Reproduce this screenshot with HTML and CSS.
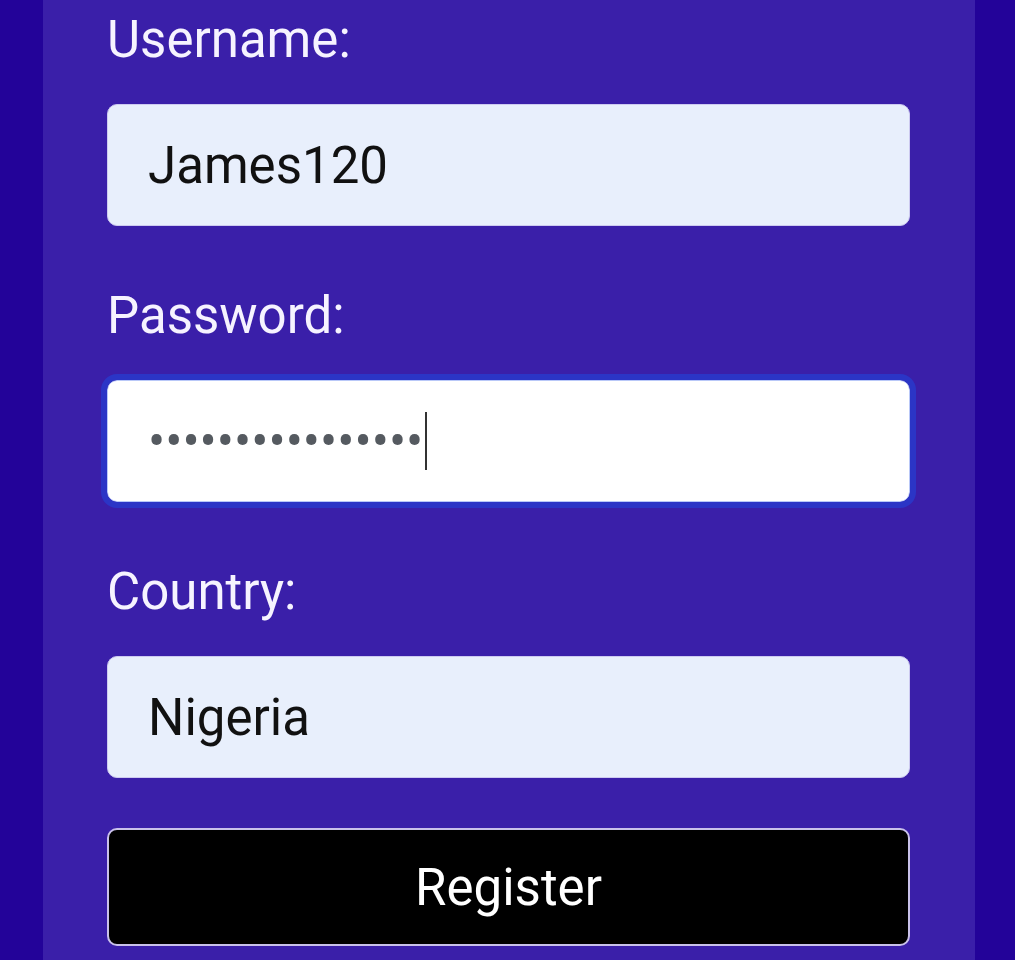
FILE: index.html
```html
<!DOCTYPE html>
<html lang="en">
<head>
<meta charset="utf-8">
<title>Register</title>
<link rel="stylesheet" href="styles.css">
</head>
<body>
<main class="panel">
  <form class="form">
    <div class="field">
      <label class="label" for="username">Username:</label>
      <input class="input autofilled" id="username" type="text" value="James120">
    </div>
    <div class="field">
      <label class="label" for="password">Password:</label>
      <div class="input-wrap">
        <input class="input focused" id="password" type="password" value="abcdefghijklmnop">
        <span class="caret"></span>
      </div>
    </div>
    <div class="field last">
      <label class="label" for="country">Country:</label>
      <input class="input autofilled" id="country" type="text" value="Nigeria">
    </div>
    <button class="btn" type="button">Register</button>
  </form>
</main>
</body>
</html>
```
FILE: styles.css
```css
html, body {
  margin: 0;
  padding: 0;
}
body {
  background: #230399;
  height: 960px;
  overflow: hidden;
  font-family: Roboto, "Liberation Sans", sans-serif;
}
.panel {
  margin: 0 40px 0 43px;
  min-height: 960px;
  background: #3a1fa9;
  padding: 10px 65px 0 64px;
  box-sizing: border-box;
}
.form {
  display: flex;
  flex-direction: column;
}
.field {
  display: flex;
  flex-direction: column;
  gap: 35px;
  margin-bottom: 60px;
}
.field.last {
  margin-bottom: 50px;
}
.label {
  font-size: 51px;
  color: #f6f3ff;
  line-height: 59px;
}
.input {
  box-sizing: border-box;
  width: 100%;
  height: 122px;
  border: 1px solid #cdcaf0;
  border-radius: 10px;
  padding: 0 40px;
  font-family: Roboto, "Liberation Sans", sans-serif;
  font-size: 51px;
  color: #111;
  background: #fff;
  margin: 0;
}
.input.autofilled {
  background: #e8effc;
}
.input.focused {
  outline: 6px solid #2b35c6;
  border-color: #b9c8f8;
  color: #555a60;
}
.input-wrap {
  position: relative;
}
.caret {
  position: absolute;
  left: 318px;
  top: 32px;
  width: 2px;
  height: 58px;
  background: #333;
}
.btn {
  box-sizing: border-box;
  width: 100%;
  height: 118px;
  background: #000;
  color: #fff;
  border: 2px solid #c9c1ea;
  border-radius: 10px;
  font-family: Roboto, "Liberation Sans", sans-serif;
  font-size: 51px;
  padding: 0;
  cursor: pointer;
}
```
